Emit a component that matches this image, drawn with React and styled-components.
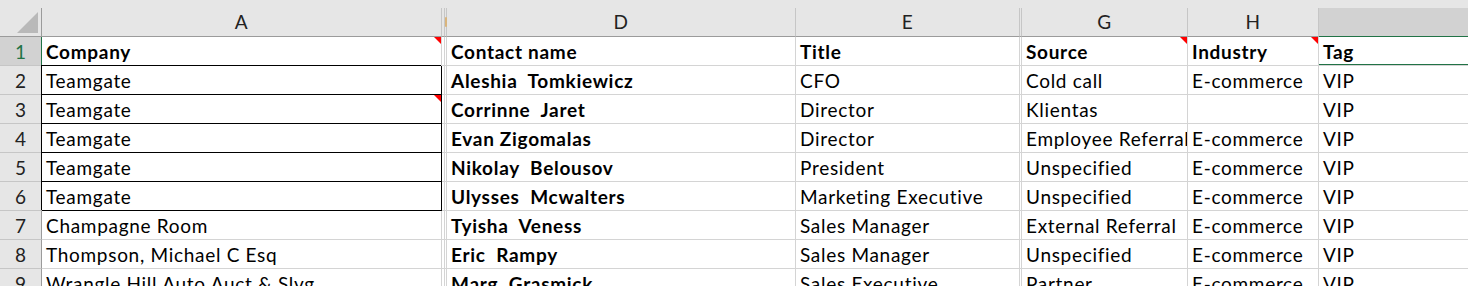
import React from "react";
import styled, { createGlobalStyle, css } from "styled-components";

const GlobalStyle = createGlobalStyle`
  html, body { margin: 0; padding: 0; background: #ffffff; overflow: hidden; }
  body { font-family: Lato, "Open Sans", sans-serif; }
`;

const GRID = "#d4d4d4";
const HEAD_SEP = "#c6c6c6";
const HEAD_EDGE = "#9b9b9b";
const GREEN = "#217346";

const Sheet = styled.div`
  display: grid;
  grid-template-columns: 42px 400px 3px 2px 349px 224px 2px 166px 131px 400px;
  grid-template-rows: 8px;
  grid-auto-rows: 29px;
  width: max-content;
  font-family: Lato, "Open Sans", sans-serif;
  font-size: 19px;
  letter-spacing: 0.7px;
  color: #000;
`;

const TopStrip = styled.div`
  grid-column: 1 / -1;
  background: #e6e6e6;
`;

const Corner = styled.div`
  background: #e6e6e6;
  border-right: 1px solid ${HEAD_EDGE};
  border-bottom: 1px solid ${HEAD_EDGE};
  display: flex;
  align-items: flex-end;
  justify-content: flex-end;
  padding: 0 3px 3px 0;
  box-sizing: border-box;
`;

const ColHead = styled.div`
  position: relative;
  box-sizing: border-box;
  background: ${(p) => (p.$selected ? "#d2d2d2" : "#e6e6e6")};
  border-right: 1px solid ${HEAD_SEP};
  border-bottom: 1px solid ${(p) => (p.$selected ? GREEN : HEAD_EDGE)};
  text-align: center;
  line-height: 26px;
  padding-top: 1px;
  color: #222;
  overflow: hidden;
  white-space: nowrap;
`;

const HiddenMark = styled.span`
  position: absolute;
  left: 0;
  top: 9px;
  width: 2px;
  height: 10px;
  border-radius: 1px;
  background: #d9b47c;
`;

const RowHead = styled.div`
  box-sizing: border-box;
  background: ${(p) => (p.$selected ? "#d2d2d2" : "#e6e6e6")};
  border-right: 1px solid ${(p) => (p.$selected ? GREEN : HEAD_EDGE)};
  border-bottom: 1px solid ${HEAD_SEP};
  text-align: center;
  line-height: 26px;
  padding-top: 2px;
  letter-spacing: 0;
  color: ${(p) => (p.$selected ? GREEN : "#222")};
`;

const Cell = styled.div`
  position: relative;
  box-sizing: border-box;
  border-right: 1px solid ${GRID};
  border-bottom: 1px solid ${GRID};
  padding: 2px 3px 0 4px;
  line-height: 26px;
  white-space: pre;
  overflow: hidden;
  font-weight: ${(p) => (p.$bold ? 700 : 400)};
  ${(p) =>
    p.$boxed &&
    css`
      border-right-color: #000;
      border-bottom-color: #000;
      box-shadow: -1px -1px 0 #000;
    `}
`;

const Selection = styled.span`
  position: absolute;
  z-index: 2;
  top: -2px;
  left: -2px;
  right: -2px;
  bottom: -1px;
  border: 2px solid ${GREEN};
  pointer-events: none;
`;

const Comment = styled.span`
  position: absolute;
  top: 0;
  right: 0;
  width: 0;
  height: 0;
  border-top: 7px solid #ff0000;
  border-left: 7px solid transparent;
`;

const HiddenCell = styled.div`
  box-sizing: border-box;
  border-right: 1px solid ${GRID};
  border-bottom: 1px solid ${GRID};
`;

const HiddenHead = styled.div`
  position: relative;
  box-sizing: border-box;
  background: #e6e6e6;
  border-right: 1px solid ${HEAD_SEP};
  border-bottom: 1px solid ${HEAD_EDGE};
`;

const rows = [
  { a: "Company", d: "Contact name", e: "Title", g: "Source", h: "Industry", i: "Tag", header: true },
  { a: "Teamgate", d: "Aleshia  Tomkiewicz", e: "CFO", g: "Cold call", h: "E-commerce", i: "VIP", boxed: true },
  { a: "Teamgate", d: "Corrinne  Jaret", e: "Director", g: "Klientas", h: "", i: "VIP", boxed: true, commentA: true },
  { a: "Teamgate", d: "Evan Zigomalas", e: "Director", g: "Employee Referral", h: "E-commerce", i: "VIP", boxed: true },
  { a: "Teamgate", d: "Nikolay  Belousov", e: "President", g: "Unspecified", h: "E-commerce", i: "VIP", boxed: true },
  { a: "Teamgate", d: "Ulysses  Mcwalters", e: "Marketing Executive", g: "Unspecified", h: "E-commerce", i: "VIP", boxed: true },
  { a: "Champagne Room", d: "Tyisha  Veness", e: "Sales Manager", g: "External Referral", h: "E-commerce", i: "VIP" },
  { a: "Thompson, Michael C Esq", d: "Eric  Rampy", e: "Sales Manager", g: "Unspecified", h: "E-commerce", i: "VIP" },
  { a: "Wrangle Hill Auto Auct & Slvg", d: "Marg  Grasmick", e: "Sales Executive", g: "Partner", h: "E-commerce", i: "VIP" },
];

const CornerTriangle = () => (
  <svg width="21" height="21" viewBox="0 0 21 21" aria-hidden="true">
    <polygon points="21,0 21,21 0,21" fill="#b9b9b9" />
  </svg>
);

export default function App() {
  return (
    <>
      <GlobalStyle />
      <Sheet>
        <TopStrip />
        <Corner>
          <CornerTriangle />
        </Corner>
        <ColHead>A</ColHead>
        <HiddenHead />
        <HiddenHead>
          <HiddenMark />
        </HiddenHead>
        <ColHead>D</ColHead>
        <ColHead>E</ColHead>
        <HiddenHead />
        <ColHead>G</ColHead>
        <ColHead>H</ColHead>
        <ColHead $selected>I</ColHead>

        {rows.map((r, idx) => (
          <React.Fragment key={idx}>
            <RowHead $selected={idx === 0}>{idx + 1}</RowHead>
            <Cell $bold={r.header} $boxed={r.boxed}>
              {r.a}
              {(idx === 0 || r.commentA) && <Comment />}
            </Cell>
            <HiddenCell />
            <HiddenCell />
            <Cell $bold>{r.d}</Cell>
            <Cell $bold={r.header}>{r.e}</Cell>
            <HiddenCell />
            <Cell $bold={r.header}>
              {r.g}
              {idx === 0 && <Comment />}
            </Cell>
            <Cell $bold={r.header}>
              {r.h}
              {idx === 0 && <Comment />}
            </Cell>
            <Cell $bold={r.header}>
              {r.i}
              {idx === 0 && <Selection />}
            </Cell>
          </React.Fragment>
        ))}
      </Sheet>
    </>
  );
}
